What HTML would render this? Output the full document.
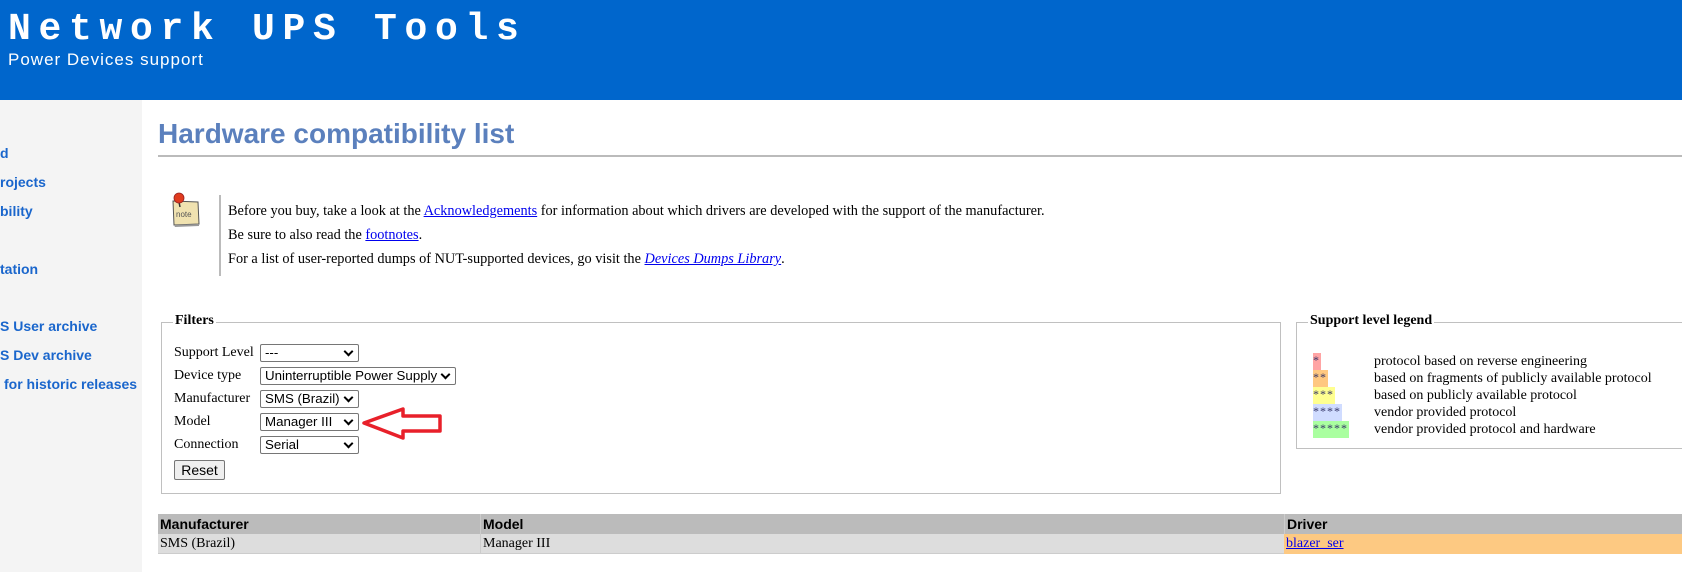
<!DOCTYPE html>
<html><head><meta charset="utf-8"><style>
*{margin:0;padding:0;box-sizing:border-box}
body{width:1682px;height:572px;overflow:hidden;background:#fff;font-family:"Liberation Serif",serif;font-size:14px;color:#000;position:relative}
.hdr{position:absolute;left:0;top:0;width:1682px;height:100px;background:#0066cc;color:#fff}
.t1{position:absolute;left:8px;top:8px;font:bold 38px "Liberation Mono",monospace;letter-spacing:7.7px;white-space:nowrap}
.t2{position:absolute;left:8px;top:50px;font:17px "Liberation Sans",sans-serif;letter-spacing:1px;white-space:nowrap}
.side{position:absolute;left:0;top:100px;width:142px;height:472px;background:#f4f4f4}
.side a{position:absolute;left:0;font:bold 14px "Liberation Sans",sans-serif;color:#1a66cc;text-decoration:none;white-space:nowrap}
h1{position:absolute;left:158px;top:118px;font:bold 28px "Liberation Sans",sans-serif;color:#5b80bd;white-space:nowrap}
.hr{position:absolute;left:158px;top:155px;width:1524px;height:2px;background:#bbb}
.vl{position:absolute;left:219px;top:195px;width:2px;height:81px;background:#bbb}
.nt{position:absolute;left:228px;white-space:nowrap;line-height:16px;font-size:14.3px}
a.l{color:#00e;text-decoration:underline}
.fs{position:absolute;border:1px solid #c0c0c0}
.lg{position:absolute;top:-10px;background:#fff;padding:0 2px;font-weight:bold;white-space:nowrap}
.lab{position:absolute;left:174px;white-space:nowrap;line-height:18px}
.sel{position:absolute;left:260px;height:18px;border:1px solid #767676;border-radius:2px;font:13.3px "Liberation Sans",sans-serif;padding-left:4px;line-height:16px;background:#fff;white-space:nowrap;overflow:hidden}
.sel:after{content:"";position:absolute;right:6px;top:3px;width:5px;height:5px;border-right:2px solid #000;border-bottom:2px solid #000;transform:rotate(45deg)}
.btn{position:absolute;left:174px;top:460px;width:51px;height:20px;border:1px solid #767676;border-radius:2px;background:#efefef;font:14px "Liberation Sans",sans-serif;text-align:center;line-height:18px}
.row{position:absolute;left:158px;width:1524px;height:20px}
.c{position:absolute;top:0;height:20px;line-height:20px;padding-left:2px;white-space:nowrap}
.st{position:absolute;left:1313px;height:17px;font-size:12px;color:#336;line-height:14px;letter-spacing:1px}
.lt{position:absolute;left:1374px;white-space:nowrap;line-height:17px}
</style></head><body>
<div class="hdr"><div class="t1">Network UPS Tools</div><div class="t2">Power Devices support</div></div>
<div class="side">
<a style="top:45px">d</a>
<a style="top:74px">rojects</a>
<a style="top:103px">bility</a>
<a style="top:161px">tation</a>
<a style="top:218px">S User archive</a>
<a style="top:247px">S Dev archive</a>
<a style="top:276px;left:4px">for historic releases</a>
</div>
<h1>Hardware compatibility list</h1>
<div class="hr"></div>
<svg style="position:absolute;left:168px;top:192px" width="36" height="36" viewBox="0 0 36 36">
<path d="M5 9 L30 10 L31 32 L6 33 Z" fill="#f0e2b0" stroke="#555" stroke-width="1"/>
<path d="M6 33 L31 32 L31 34 L7 35Z" fill="#999"/>
<text x="8" y="25" font-size="8" fill="#555" font-family="Liberation Sans">note</text>
<line x1="11" y1="10" x2="12" y2="15" stroke="#333" stroke-width="1.5"/>
<circle cx="11" cy="6" r="5" fill="#e03b1e" stroke="#922" stroke-width="0.8"/>
</svg>
<div class="vl"></div>
<div class="nt" style="top:203px">Before you buy, take a look at the <a class="l">Acknowledgements</a> for information about which drivers are developed with the support of the manufacturer.</div>
<div class="nt" style="top:227px">Be sure to also read the <a class="l">footnotes</a>.</div>
<div class="nt" style="top:251px">For a list of user-reported dumps of NUT-supported devices, go visit the <a class="l"><i>Devices Dumps Library</i></a>.</div>

<div class="fs" style="left:161px;top:322px;width:1120px;height:172px"><div class="lg" style="left:11px">Filters</div></div>
<div class="lab" style="top:344px">Support Level</div>
<div class="lab" style="top:367px">Device type</div>
<div class="lab" style="top:390px">Manufacturer</div>
<div class="lab" style="top:413px">Model</div>
<div class="lab" style="top:436px">Connection</div>
<div class="sel" style="top:344px;width:99px">---</div>
<div class="sel" style="top:367px;width:196px;padding-right:18px">Uninterruptible Power Supply</div>
<div class="sel" style="top:390px;width:99px;padding-right:16px">SMS (Brazil)</div>
<div class="sel" style="top:413px;width:99px">Manager III</div>
<div class="sel" style="top:436px;width:99px">Serial</div>
<div class="btn">Reset</div>
<svg style="position:absolute;left:360px;top:406px" width="86" height="36" viewBox="0 0 86 36">
<path d="M4 17 L43 3 L43 10 L80 10 L80 25 L43 25 L43 32 Z" fill="none" stroke="#e8202a" stroke-width="3.5" stroke-linejoin="round"/>
</svg>

<div class="fs" style="left:1296px;top:322px;width:400px;height:127px"><div class="lg" style="left:11px">Support level legend</div></div>
<div class="st" style="top:353px;width:8px;background:#ffa4a4">*</div>
<div class="st" style="top:370px;width:15px;background:#ffc880">**</div>
<div class="st" style="top:387px;width:22px;background:#ffff90">***</div>
<div class="st" style="top:404px;width:29px;background:#d0dcff">****</div>
<div class="st" style="top:421px;width:36px;background:#aaffa0">*****</div>
<div class="lt" style="top:353px">protocol based on reverse engineering</div>
<div class="lt" style="top:370px">based on fragments of publicly available protocol</div>
<div class="lt" style="top:387px">based on publicly available protocol</div>
<div class="lt" style="top:404px">vendor provided protocol</div>
<div class="lt" style="top:421px">vendor provided protocol and hardware</div>

<div class="row" style="top:514px;background:#bbb;font:bold 14px 'Liberation Sans',sans-serif">
<div class="c" style="left:0">Manufacturer</div>
<div class="c" style="left:322px;border-left:1px solid #ccc">Model</div>
<div class="c" style="left:1126px;border-left:1px solid #ccc">Driver</div>
</div>
<div class="row" style="top:534px;background:#ddd;border-bottom:1px solid #ccc">
<div class="c" style="left:0">SMS (Brazil)</div>
<div class="c" style="left:322px;border-left:1px solid #ccc">Manager III</div>
<div class="c" style="left:1126px;width:398px;background:#fdc982"><a class="l">blazer_ser</a></div>
</div>
</body></html>
